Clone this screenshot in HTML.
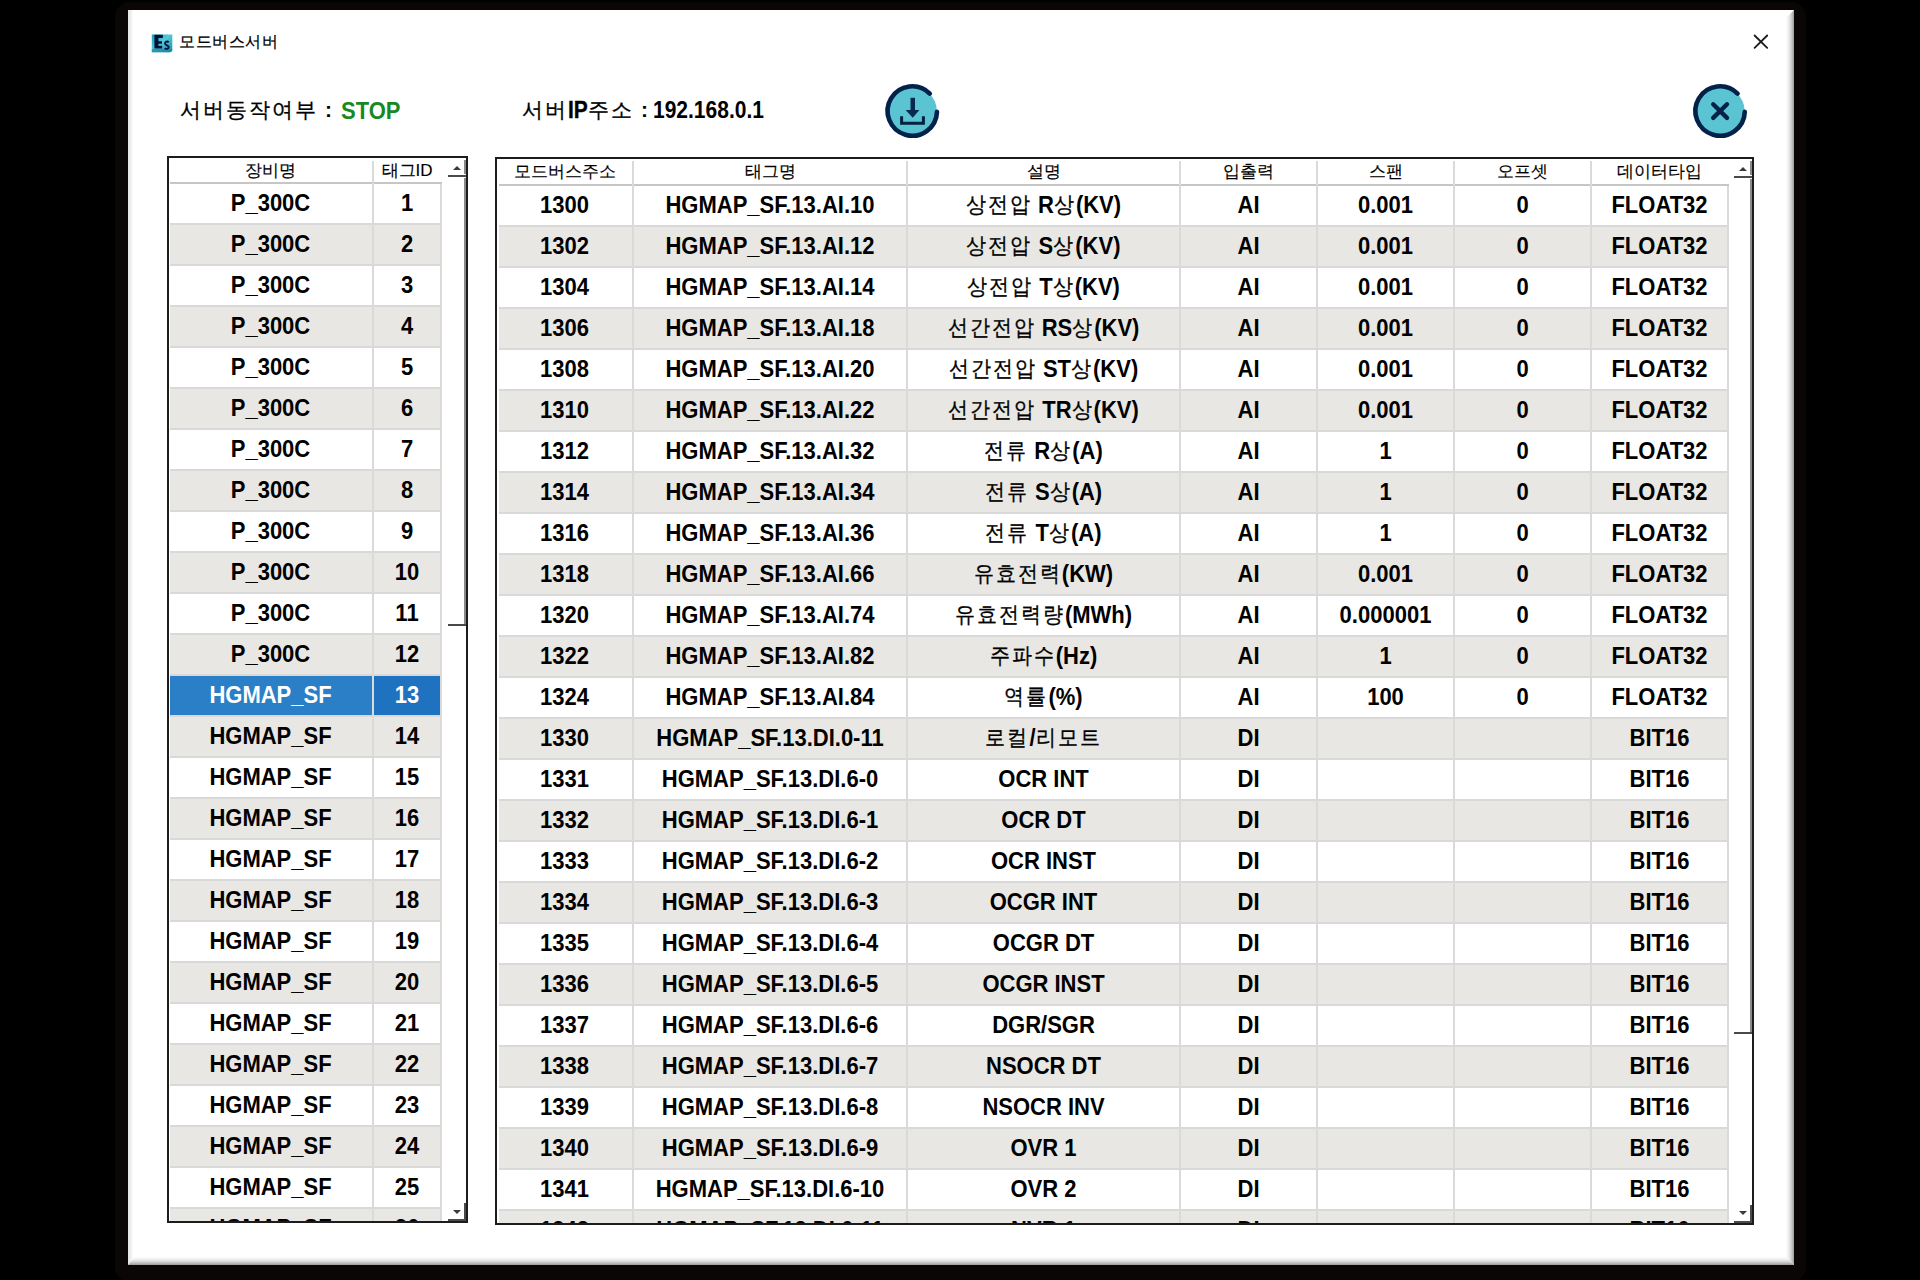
<!DOCTYPE html>
<html><head><meta charset="utf-8"><style>
html,body{margin:0;padding:0}
body{width:1920px;height:1280px;background:#000;position:relative;overflow:hidden;font-family:"Liberation Sans",sans-serif;color:#000}
.fr{position:absolute;left:115px;top:2px;width:1691px;height:1280px;background:#0a0605;border-radius:15px}
.win{position:absolute;left:128px;top:10px;width:1666px;height:1255px;background:#fff;overflow:hidden}
.bl{position:absolute;left:0;top:0;width:5px;height:100%;background:linear-gradient(90deg,#e6e6e6,#ececec 50%,#fff)}
.br{position:absolute;right:0;top:0;width:8px;height:100%;background:linear-gradient(90deg,#fff,#e4e4e4 45%,#c4c4c4 72%,#9c9c9c);clip-path:polygon(0 8px,100% 0,100% 100%,0 calc(100% - 8px))}
.bb{position:absolute;left:0;bottom:0;width:100%;height:8px;background:linear-gradient(180deg,#fff,#e4e4e4 45%,#c4c4c4 72%,#9a9a9a);clip-path:polygon(7px 0,calc(100% - 8px) 0,100% 100%,0 100%)}
.ab{position:absolute;white-space:nowrap}
.tb{position:absolute;box-sizing:border-box;border:2px solid #1c1c1c;background:#fff}
.in{position:absolute;left:0;top:0;overflow:hidden}
.in>div{position:absolute}
.hc{text-align:center;font-size:17px;line-height:20px;height:20px;letter-spacing:0px;-webkit-text-stroke:0.15px #000}
.sy{display:inline-block;transform:scaleY(1.12)}
.hl{height:2px;background:#c6c6c6}
.rl{height:2px;background:#d9d9d9}
.vl{width:2px;background:#dadada}
.r{height:39px;background:#fff}
.r.a{background:#e8e7e3}
.r.s{background:linear-gradient(90deg,#2a7fc7 0,#2a7fc7 202px,#1f72bf 202px);color:#fff}
.c{position:absolute;top:-1px;height:39px;line-height:39px;text-align:center;font-weight:bold;font-size:22px;white-space:nowrap;transform:scaleY(1.1)}
.c i{font-style:normal;font-weight:normal;letter-spacing:2px;font-size:20px;-webkit-text-stroke:0.3px #000;position:relative;top:-1px}
.s .c i{-webkit-text-stroke-color:#fff}
.tri{width:0;height:0;border-left:4px solid transparent;border-right:4px solid transparent}
.tri.up{border-bottom:4px solid #3a3a3a}
.tri.dn{border-top:4px solid #3a3a3a}
.dk{background:#4a4a4a}
.gr{background:#8a8a8a}
</style></head><body>
<div class="fr"></div>
<div class="win"><div class="bl"></div><div class="br"></div><div class="bb"></div></div>
<svg class="ab" style="left:151px;top:34px" width="22" height="19" viewBox="0 0 22 19">
<defs><linearGradient id="ig" x1="0" y1="0" x2="1" y2="1"><stop offset="0" stop-color="#12a0b4"/><stop offset="0.45" stop-color="#55c8d6"/><stop offset="1" stop-color="#1592a8"/></linearGradient></defs>
<path d="M0.8 0.6 H21.3 V15.5 Q21.3 18.3 18.5 18.3 H0.8 Z" fill="url(#ig)"/>
<path d="M0.8 15 H21.3 V15.5 Q21.3 18.3 18.5 18.3 H0.8 Z" fill="#168aa2" opacity="0.7"/>
<path d="M3.4 0.8 H11.8 V4.1 H7.4 V7.3 H11 V9.8 H7.4 V11.8 H11.2 V14.6 H3.4 Z" fill="#06103a"/>
<path d="M17.6 8.3 C16.6 7 14 7.3 14 9.4 C14 11.6 17.8 11 17.8 13 C17.8 15.2 14.8 15.3 13.7 14.2" fill="none" stroke="#06103a" stroke-width="1.9"/>
</svg>
<div class="ab" style="left:179px;top:32px;font-size:16px;letter-spacing:0.6px;-webkit-text-stroke:0.25px #000">모드버스서버</div>
<svg class="ab" style="left:1750px;top:31px" width="22" height="22" viewBox="0 0 22 22"><path d="M4.6 4.5L17.2 16.8M17.2 4.5L4.6 16.8" stroke="#1a1a1a" stroke-width="1.8" stroke-linecap="round"/></svg>
<div class="ab" style="left:180px;top:96px;font-size:21px;letter-spacing:2px;-webkit-text-stroke:0.3px #000">서버동작여부</div>
<div class="ab" style="left:325px;top:98px;font-size:21px;font-weight:bold">:</div>
<div class="ab" style="left:341px;top:98px;font-size:22px;font-weight:bold;color:#168a22"><span class="sy">STOP</span></div>
<div class="ab" style="left:522px;top:96px;font-size:21px;letter-spacing:2px;-webkit-text-stroke:0.3px #000">서버<b style="font-family:'Liberation Sans';letter-spacing:0;font-size:21px" class="sy">IP</b>주소</div>
<div class="ab" style="left:641px;top:98px;font-size:21px;font-weight:bold">:</div>
<div class="ab" style="left:653px;top:98px;font-size:21px;font-weight:bold"><span class="sy">192.168.0.1</span></div>
<svg class="ab" style="left:882px;top:81px" width="62" height="60" viewBox="0 0 62 60">
<circle cx="30.3" cy="30" r="24.5" fill="#5bc4d3"/>
<path d="M47.77 12.53 A24.7 24.7 0 1 0 54.98 30.86" fill="none" stroke="#03224a" stroke-width="4.6" stroke-linecap="round"/>
<rect x="28.5" y="16.8" width="4.5" height="13" fill="#05294f"/>
<path d="M23.6 29 L37.4 29 L30.75 36.8 Z" fill="#05294f"/>
<path d="M19.6 35.3 V42.2 H41.4 V35.3" fill="none" stroke="#04203f" stroke-width="3"/>
</svg>
<svg class="ab" style="left:1690px;top:81px" width="62" height="60" viewBox="0 0 62 60">
<circle cx="30.1" cy="30" r="24.5" fill="#5bc4d3"/>
<path d="M47.57 12.53 A24.7 24.7 0 1 0 54.78 30.86" fill="none" stroke="#03224a" stroke-width="4.6" stroke-linecap="round"/>
<path d="M23.2 23.3 L37 36.9 M37 23.3 L23.2 36.9" stroke="#04234a" stroke-width="4.4" stroke-linecap="round"/>
</svg>
<div class="tb" style="left:167px;top:156px;width:301px;height:1067px">
<div class="in" style="width:297px;height:1063px">
<div class="hc" style="left:0px;width:203px;top:3px">장비명</div>
<div class="hc" style="left:205px;width:66px;top:3px">태그ID</div>
<div class="hl" style="left:1px;width:272px;top:24px"></div>
<div class="r" style="left:1px;width:270px;top:26px">
<div class="c" style="left:-1px;width:203px">P_300C</div>
<div class="c" style="left:204px;width:66px">1</div>
</div>
<div class="rl" style="left:1px;width:272px;top:65px"></div>
<div class="r a" style="left:1px;width:270px;top:67px">
<div class="c" style="left:-1px;width:203px">P_300C</div>
<div class="c" style="left:204px;width:66px">2</div>
</div>
<div class="rl" style="left:1px;width:272px;top:106px"></div>
<div class="r" style="left:1px;width:270px;top:108px">
<div class="c" style="left:-1px;width:203px">P_300C</div>
<div class="c" style="left:204px;width:66px">3</div>
</div>
<div class="rl" style="left:1px;width:272px;top:147px"></div>
<div class="r a" style="left:1px;width:270px;top:149px">
<div class="c" style="left:-1px;width:203px">P_300C</div>
<div class="c" style="left:204px;width:66px">4</div>
</div>
<div class="rl" style="left:1px;width:272px;top:188px"></div>
<div class="r" style="left:1px;width:270px;top:190px">
<div class="c" style="left:-1px;width:203px">P_300C</div>
<div class="c" style="left:204px;width:66px">5</div>
</div>
<div class="rl" style="left:1px;width:272px;top:229px"></div>
<div class="r a" style="left:1px;width:270px;top:231px">
<div class="c" style="left:-1px;width:203px">P_300C</div>
<div class="c" style="left:204px;width:66px">6</div>
</div>
<div class="rl" style="left:1px;width:272px;top:270px"></div>
<div class="r" style="left:1px;width:270px;top:272px">
<div class="c" style="left:-1px;width:203px">P_300C</div>
<div class="c" style="left:204px;width:66px">7</div>
</div>
<div class="rl" style="left:1px;width:272px;top:311px"></div>
<div class="r a" style="left:1px;width:270px;top:313px">
<div class="c" style="left:-1px;width:203px">P_300C</div>
<div class="c" style="left:204px;width:66px">8</div>
</div>
<div class="rl" style="left:1px;width:272px;top:352px"></div>
<div class="r" style="left:1px;width:270px;top:354px">
<div class="c" style="left:-1px;width:203px">P_300C</div>
<div class="c" style="left:204px;width:66px">9</div>
</div>
<div class="rl" style="left:1px;width:272px;top:393px"></div>
<div class="r a" style="left:1px;width:270px;top:395px">
<div class="c" style="left:-1px;width:203px">P_300C</div>
<div class="c" style="left:204px;width:66px">10</div>
</div>
<div class="rl" style="left:1px;width:272px;top:434px"></div>
<div class="r" style="left:1px;width:270px;top:436px">
<div class="c" style="left:-1px;width:203px">P_300C</div>
<div class="c" style="left:204px;width:66px">11</div>
</div>
<div class="rl" style="left:1px;width:272px;top:475px"></div>
<div class="r a" style="left:1px;width:270px;top:477px">
<div class="c" style="left:-1px;width:203px">P_300C</div>
<div class="c" style="left:204px;width:66px">12</div>
</div>
<div class="rl" style="left:1px;width:272px;top:516px"></div>
<div class="r s" style="left:1px;width:270px;top:518px">
<div class="c" style="left:-1px;width:203px">HGMAP_SF</div>
<div class="c" style="left:204px;width:66px">13</div>
</div>
<div class="rl" style="left:1px;width:272px;top:557px"></div>
<div class="r a" style="left:1px;width:270px;top:559px">
<div class="c" style="left:-1px;width:203px">HGMAP_SF</div>
<div class="c" style="left:204px;width:66px">14</div>
</div>
<div class="rl" style="left:1px;width:272px;top:598px"></div>
<div class="r" style="left:1px;width:270px;top:600px">
<div class="c" style="left:-1px;width:203px">HGMAP_SF</div>
<div class="c" style="left:204px;width:66px">15</div>
</div>
<div class="rl" style="left:1px;width:272px;top:639px"></div>
<div class="r a" style="left:1px;width:270px;top:641px">
<div class="c" style="left:-1px;width:203px">HGMAP_SF</div>
<div class="c" style="left:204px;width:66px">16</div>
</div>
<div class="rl" style="left:1px;width:272px;top:680px"></div>
<div class="r" style="left:1px;width:270px;top:682px">
<div class="c" style="left:-1px;width:203px">HGMAP_SF</div>
<div class="c" style="left:204px;width:66px">17</div>
</div>
<div class="rl" style="left:1px;width:272px;top:721px"></div>
<div class="r a" style="left:1px;width:270px;top:723px">
<div class="c" style="left:-1px;width:203px">HGMAP_SF</div>
<div class="c" style="left:204px;width:66px">18</div>
</div>
<div class="rl" style="left:1px;width:272px;top:762px"></div>
<div class="r" style="left:1px;width:270px;top:764px">
<div class="c" style="left:-1px;width:203px">HGMAP_SF</div>
<div class="c" style="left:204px;width:66px">19</div>
</div>
<div class="rl" style="left:1px;width:272px;top:803px"></div>
<div class="r a" style="left:1px;width:270px;top:805px">
<div class="c" style="left:-1px;width:203px">HGMAP_SF</div>
<div class="c" style="left:204px;width:66px">20</div>
</div>
<div class="rl" style="left:1px;width:272px;top:844px"></div>
<div class="r" style="left:1px;width:270px;top:846px">
<div class="c" style="left:-1px;width:203px">HGMAP_SF</div>
<div class="c" style="left:204px;width:66px">21</div>
</div>
<div class="rl" style="left:1px;width:272px;top:885px"></div>
<div class="r a" style="left:1px;width:270px;top:887px">
<div class="c" style="left:-1px;width:203px">HGMAP_SF</div>
<div class="c" style="left:204px;width:66px">22</div>
</div>
<div class="rl" style="left:1px;width:272px;top:926px"></div>
<div class="r" style="left:1px;width:270px;top:928px">
<div class="c" style="left:-1px;width:203px">HGMAP_SF</div>
<div class="c" style="left:204px;width:66px">23</div>
</div>
<div class="rl" style="left:1px;width:272px;top:967px"></div>
<div class="r a" style="left:1px;width:270px;top:969px">
<div class="c" style="left:-1px;width:203px">HGMAP_SF</div>
<div class="c" style="left:204px;width:66px">24</div>
</div>
<div class="rl" style="left:1px;width:272px;top:1008px"></div>
<div class="r" style="left:1px;width:270px;top:1010px">
<div class="c" style="left:-1px;width:203px">HGMAP_SF</div>
<div class="c" style="left:204px;width:66px">25</div>
</div>
<div class="rl" style="left:1px;width:272px;top:1049px"></div>
<div class="r a" style="left:1px;width:270px;top:1051px">
<div class="c" style="left:-1px;width:203px">HGMAP_SF</div>
<div class="c" style="left:204px;width:66px">26</div>
</div>
<div class="rl" style="left:1px;width:272px;top:1090px"></div>
<div class="vl" style="left:203px;top:3px;height:1060px"></div>
<div class="vl" style="left:271px;top:26px;height:1037px"></div>
<div class="tri up" style="left:284px;top:8px"></div>
<div class="tri dn" style="left:284px;top:1052px"></div>
<div class="dk" style="left:279px;top:17px;width:18px;height:2px"></div>
<div class="gr" style="left:295px;top:2px;width:2px;height:14px"></div>
<div class="gr" style="left:295px;top:20px;width:2px;height:446px"></div>
<div class="dk" style="left:279px;top:466px;width:18px;height:2px"></div>
<div class="dk" style="left:295px;top:1045px;width:2px;height:18px"></div>
<div class="dk" style="left:279px;top:1061px;width:18px;height:2px"></div>
</div></div>
<div class="tb" style="left:495px;top:157px;width:1259px;height:1068px">
<div class="in" style="width:1255px;height:1064px">
<div class="hc" style="left:0px;width:135px;top:3px">모드버스주소</div>
<div class="hc" style="left:137px;width:272px;top:3px">태그명</div>
<div class="hc" style="left:411px;width:271px;top:3px">설명</div>
<div class="hc" style="left:684px;width:135px;top:3px">입출력</div>
<div class="hc" style="left:821px;width:135px;top:3px">스팬</div>
<div class="hc" style="left:958px;width:135px;top:3px">오프셋</div>
<div class="hc" style="left:1095px;width:135px;top:3px">데이터타입</div>
<div class="hl" style="left:2px;width:1230px;top:25px"></div>
<div class="r" style="left:2px;width:1228px;top:27px">
<div class="c" style="left:-2px;width:135px">1300</div>
<div class="c" style="left:135px;width:272px">HGMAP_SF.13.AI.10</div>
<div class="c" style="left:409px;width:271px"><i>상전압</i> R<i>상</i>(KV)</div>
<div class="c" style="left:682px;width:135px">AI</div>
<div class="c" style="left:819px;width:135px">0.001</div>
<div class="c" style="left:956px;width:135px">0</div>
<div class="c" style="left:1093px;width:135px">FLOAT32</div>
</div>
<div class="rl" style="left:2px;width:1230px;top:66px"></div>
<div class="r a" style="left:2px;width:1228px;top:68px">
<div class="c" style="left:-2px;width:135px">1302</div>
<div class="c" style="left:135px;width:272px">HGMAP_SF.13.AI.12</div>
<div class="c" style="left:409px;width:271px"><i>상전압</i> S<i>상</i>(KV)</div>
<div class="c" style="left:682px;width:135px">AI</div>
<div class="c" style="left:819px;width:135px">0.001</div>
<div class="c" style="left:956px;width:135px">0</div>
<div class="c" style="left:1093px;width:135px">FLOAT32</div>
</div>
<div class="rl" style="left:2px;width:1230px;top:107px"></div>
<div class="r" style="left:2px;width:1228px;top:109px">
<div class="c" style="left:-2px;width:135px">1304</div>
<div class="c" style="left:135px;width:272px">HGMAP_SF.13.AI.14</div>
<div class="c" style="left:409px;width:271px"><i>상전압</i> T<i>상</i>(KV)</div>
<div class="c" style="left:682px;width:135px">AI</div>
<div class="c" style="left:819px;width:135px">0.001</div>
<div class="c" style="left:956px;width:135px">0</div>
<div class="c" style="left:1093px;width:135px">FLOAT32</div>
</div>
<div class="rl" style="left:2px;width:1230px;top:148px"></div>
<div class="r a" style="left:2px;width:1228px;top:150px">
<div class="c" style="left:-2px;width:135px">1306</div>
<div class="c" style="left:135px;width:272px">HGMAP_SF.13.AI.18</div>
<div class="c" style="left:409px;width:271px"><i>선간전압</i> RS<i>상</i>(KV)</div>
<div class="c" style="left:682px;width:135px">AI</div>
<div class="c" style="left:819px;width:135px">0.001</div>
<div class="c" style="left:956px;width:135px">0</div>
<div class="c" style="left:1093px;width:135px">FLOAT32</div>
</div>
<div class="rl" style="left:2px;width:1230px;top:189px"></div>
<div class="r" style="left:2px;width:1228px;top:191px">
<div class="c" style="left:-2px;width:135px">1308</div>
<div class="c" style="left:135px;width:272px">HGMAP_SF.13.AI.20</div>
<div class="c" style="left:409px;width:271px"><i>선간전압</i> ST<i>상</i>(KV)</div>
<div class="c" style="left:682px;width:135px">AI</div>
<div class="c" style="left:819px;width:135px">0.001</div>
<div class="c" style="left:956px;width:135px">0</div>
<div class="c" style="left:1093px;width:135px">FLOAT32</div>
</div>
<div class="rl" style="left:2px;width:1230px;top:230px"></div>
<div class="r a" style="left:2px;width:1228px;top:232px">
<div class="c" style="left:-2px;width:135px">1310</div>
<div class="c" style="left:135px;width:272px">HGMAP_SF.13.AI.22</div>
<div class="c" style="left:409px;width:271px"><i>선간전압</i> TR<i>상</i>(KV)</div>
<div class="c" style="left:682px;width:135px">AI</div>
<div class="c" style="left:819px;width:135px">0.001</div>
<div class="c" style="left:956px;width:135px">0</div>
<div class="c" style="left:1093px;width:135px">FLOAT32</div>
</div>
<div class="rl" style="left:2px;width:1230px;top:271px"></div>
<div class="r" style="left:2px;width:1228px;top:273px">
<div class="c" style="left:-2px;width:135px">1312</div>
<div class="c" style="left:135px;width:272px">HGMAP_SF.13.AI.32</div>
<div class="c" style="left:409px;width:271px"><i>전류</i> R<i>상</i>(A)</div>
<div class="c" style="left:682px;width:135px">AI</div>
<div class="c" style="left:819px;width:135px">1</div>
<div class="c" style="left:956px;width:135px">0</div>
<div class="c" style="left:1093px;width:135px">FLOAT32</div>
</div>
<div class="rl" style="left:2px;width:1230px;top:312px"></div>
<div class="r a" style="left:2px;width:1228px;top:314px">
<div class="c" style="left:-2px;width:135px">1314</div>
<div class="c" style="left:135px;width:272px">HGMAP_SF.13.AI.34</div>
<div class="c" style="left:409px;width:271px"><i>전류</i> S<i>상</i>(A)</div>
<div class="c" style="left:682px;width:135px">AI</div>
<div class="c" style="left:819px;width:135px">1</div>
<div class="c" style="left:956px;width:135px">0</div>
<div class="c" style="left:1093px;width:135px">FLOAT32</div>
</div>
<div class="rl" style="left:2px;width:1230px;top:353px"></div>
<div class="r" style="left:2px;width:1228px;top:355px">
<div class="c" style="left:-2px;width:135px">1316</div>
<div class="c" style="left:135px;width:272px">HGMAP_SF.13.AI.36</div>
<div class="c" style="left:409px;width:271px"><i>전류</i> T<i>상</i>(A)</div>
<div class="c" style="left:682px;width:135px">AI</div>
<div class="c" style="left:819px;width:135px">1</div>
<div class="c" style="left:956px;width:135px">0</div>
<div class="c" style="left:1093px;width:135px">FLOAT32</div>
</div>
<div class="rl" style="left:2px;width:1230px;top:394px"></div>
<div class="r a" style="left:2px;width:1228px;top:396px">
<div class="c" style="left:-2px;width:135px">1318</div>
<div class="c" style="left:135px;width:272px">HGMAP_SF.13.AI.66</div>
<div class="c" style="left:409px;width:271px"><i>유효전력</i>(KW)</div>
<div class="c" style="left:682px;width:135px">AI</div>
<div class="c" style="left:819px;width:135px">0.001</div>
<div class="c" style="left:956px;width:135px">0</div>
<div class="c" style="left:1093px;width:135px">FLOAT32</div>
</div>
<div class="rl" style="left:2px;width:1230px;top:435px"></div>
<div class="r" style="left:2px;width:1228px;top:437px">
<div class="c" style="left:-2px;width:135px">1320</div>
<div class="c" style="left:135px;width:272px">HGMAP_SF.13.AI.74</div>
<div class="c" style="left:409px;width:271px"><i>유효전력량</i>(MWh)</div>
<div class="c" style="left:682px;width:135px">AI</div>
<div class="c" style="left:819px;width:135px">0.000001</div>
<div class="c" style="left:956px;width:135px">0</div>
<div class="c" style="left:1093px;width:135px">FLOAT32</div>
</div>
<div class="rl" style="left:2px;width:1230px;top:476px"></div>
<div class="r a" style="left:2px;width:1228px;top:478px">
<div class="c" style="left:-2px;width:135px">1322</div>
<div class="c" style="left:135px;width:272px">HGMAP_SF.13.AI.82</div>
<div class="c" style="left:409px;width:271px"><i>주파수</i>(Hz)</div>
<div class="c" style="left:682px;width:135px">AI</div>
<div class="c" style="left:819px;width:135px">1</div>
<div class="c" style="left:956px;width:135px">0</div>
<div class="c" style="left:1093px;width:135px">FLOAT32</div>
</div>
<div class="rl" style="left:2px;width:1230px;top:517px"></div>
<div class="r" style="left:2px;width:1228px;top:519px">
<div class="c" style="left:-2px;width:135px">1324</div>
<div class="c" style="left:135px;width:272px">HGMAP_SF.13.AI.84</div>
<div class="c" style="left:409px;width:271px"><i>역률</i>(%)</div>
<div class="c" style="left:682px;width:135px">AI</div>
<div class="c" style="left:819px;width:135px">100</div>
<div class="c" style="left:956px;width:135px">0</div>
<div class="c" style="left:1093px;width:135px">FLOAT32</div>
</div>
<div class="rl" style="left:2px;width:1230px;top:558px"></div>
<div class="r a" style="left:2px;width:1228px;top:560px">
<div class="c" style="left:-2px;width:135px">1330</div>
<div class="c" style="left:135px;width:272px">HGMAP_SF.13.DI.0-11</div>
<div class="c" style="left:409px;width:271px"><i>로컬</i>/<i>리모트</i></div>
<div class="c" style="left:682px;width:135px">DI</div>
<div class="c" style="left:1093px;width:135px">BIT16</div>
</div>
<div class="rl" style="left:2px;width:1230px;top:599px"></div>
<div class="r" style="left:2px;width:1228px;top:601px">
<div class="c" style="left:-2px;width:135px">1331</div>
<div class="c" style="left:135px;width:272px">HGMAP_SF.13.DI.6-0</div>
<div class="c" style="left:409px;width:271px">OCR INT</div>
<div class="c" style="left:682px;width:135px">DI</div>
<div class="c" style="left:1093px;width:135px">BIT16</div>
</div>
<div class="rl" style="left:2px;width:1230px;top:640px"></div>
<div class="r a" style="left:2px;width:1228px;top:642px">
<div class="c" style="left:-2px;width:135px">1332</div>
<div class="c" style="left:135px;width:272px">HGMAP_SF.13.DI.6-1</div>
<div class="c" style="left:409px;width:271px">OCR DT</div>
<div class="c" style="left:682px;width:135px">DI</div>
<div class="c" style="left:1093px;width:135px">BIT16</div>
</div>
<div class="rl" style="left:2px;width:1230px;top:681px"></div>
<div class="r" style="left:2px;width:1228px;top:683px">
<div class="c" style="left:-2px;width:135px">1333</div>
<div class="c" style="left:135px;width:272px">HGMAP_SF.13.DI.6-2</div>
<div class="c" style="left:409px;width:271px">OCR INST</div>
<div class="c" style="left:682px;width:135px">DI</div>
<div class="c" style="left:1093px;width:135px">BIT16</div>
</div>
<div class="rl" style="left:2px;width:1230px;top:722px"></div>
<div class="r a" style="left:2px;width:1228px;top:724px">
<div class="c" style="left:-2px;width:135px">1334</div>
<div class="c" style="left:135px;width:272px">HGMAP_SF.13.DI.6-3</div>
<div class="c" style="left:409px;width:271px">OCGR INT</div>
<div class="c" style="left:682px;width:135px">DI</div>
<div class="c" style="left:1093px;width:135px">BIT16</div>
</div>
<div class="rl" style="left:2px;width:1230px;top:763px"></div>
<div class="r" style="left:2px;width:1228px;top:765px">
<div class="c" style="left:-2px;width:135px">1335</div>
<div class="c" style="left:135px;width:272px">HGMAP_SF.13.DI.6-4</div>
<div class="c" style="left:409px;width:271px">OCGR DT</div>
<div class="c" style="left:682px;width:135px">DI</div>
<div class="c" style="left:1093px;width:135px">BIT16</div>
</div>
<div class="rl" style="left:2px;width:1230px;top:804px"></div>
<div class="r a" style="left:2px;width:1228px;top:806px">
<div class="c" style="left:-2px;width:135px">1336</div>
<div class="c" style="left:135px;width:272px">HGMAP_SF.13.DI.6-5</div>
<div class="c" style="left:409px;width:271px">OCGR INST</div>
<div class="c" style="left:682px;width:135px">DI</div>
<div class="c" style="left:1093px;width:135px">BIT16</div>
</div>
<div class="rl" style="left:2px;width:1230px;top:845px"></div>
<div class="r" style="left:2px;width:1228px;top:847px">
<div class="c" style="left:-2px;width:135px">1337</div>
<div class="c" style="left:135px;width:272px">HGMAP_SF.13.DI.6-6</div>
<div class="c" style="left:409px;width:271px">DGR/SGR</div>
<div class="c" style="left:682px;width:135px">DI</div>
<div class="c" style="left:1093px;width:135px">BIT16</div>
</div>
<div class="rl" style="left:2px;width:1230px;top:886px"></div>
<div class="r a" style="left:2px;width:1228px;top:888px">
<div class="c" style="left:-2px;width:135px">1338</div>
<div class="c" style="left:135px;width:272px">HGMAP_SF.13.DI.6-7</div>
<div class="c" style="left:409px;width:271px">NSOCR DT</div>
<div class="c" style="left:682px;width:135px">DI</div>
<div class="c" style="left:1093px;width:135px">BIT16</div>
</div>
<div class="rl" style="left:2px;width:1230px;top:927px"></div>
<div class="r" style="left:2px;width:1228px;top:929px">
<div class="c" style="left:-2px;width:135px">1339</div>
<div class="c" style="left:135px;width:272px">HGMAP_SF.13.DI.6-8</div>
<div class="c" style="left:409px;width:271px">NSOCR INV</div>
<div class="c" style="left:682px;width:135px">DI</div>
<div class="c" style="left:1093px;width:135px">BIT16</div>
</div>
<div class="rl" style="left:2px;width:1230px;top:968px"></div>
<div class="r a" style="left:2px;width:1228px;top:970px">
<div class="c" style="left:-2px;width:135px">1340</div>
<div class="c" style="left:135px;width:272px">HGMAP_SF.13.DI.6-9</div>
<div class="c" style="left:409px;width:271px">OVR 1</div>
<div class="c" style="left:682px;width:135px">DI</div>
<div class="c" style="left:1093px;width:135px">BIT16</div>
</div>
<div class="rl" style="left:2px;width:1230px;top:1009px"></div>
<div class="r" style="left:2px;width:1228px;top:1011px">
<div class="c" style="left:-2px;width:135px">1341</div>
<div class="c" style="left:135px;width:272px">HGMAP_SF.13.DI.6-10</div>
<div class="c" style="left:409px;width:271px">OVR 2</div>
<div class="c" style="left:682px;width:135px">DI</div>
<div class="c" style="left:1093px;width:135px">BIT16</div>
</div>
<div class="rl" style="left:2px;width:1230px;top:1050px"></div>
<div class="r a" style="left:2px;width:1228px;top:1052px">
<div class="c" style="left:-2px;width:135px">1342</div>
<div class="c" style="left:135px;width:272px">HGMAP_SF.13.DI.6-11</div>
<div class="c" style="left:409px;width:271px">NVR 1</div>
<div class="c" style="left:682px;width:135px">DI</div>
<div class="c" style="left:1093px;width:135px">BIT16</div>
</div>
<div class="rl" style="left:2px;width:1230px;top:1091px"></div>
<div class="vl" style="left:135px;top:2px;height:1062px"></div>
<div class="vl" style="left:409px;top:2px;height:1062px"></div>
<div class="vl" style="left:682px;top:2px;height:1062px"></div>
<div class="vl" style="left:819px;top:2px;height:1062px"></div>
<div class="vl" style="left:956px;top:2px;height:1062px"></div>
<div class="vl" style="left:1093px;top:2px;height:1062px"></div>
<div class="vl" style="left:1230px;top:27px;height:1037px"></div>
<div class="tri up" style="left:1242px;top:8px"></div>
<div class="tri dn" style="left:1242px;top:1052px"></div>
<div class="dk" style="left:1237px;top:17px;width:18px;height:2px"></div>
<div class="gr" style="left:1253px;top:2px;width:2px;height:14px"></div>
<div class="gr" style="left:1253px;top:20px;width:2px;height:853px"></div>
<div class="dk" style="left:1237px;top:873px;width:18px;height:2px"></div>
<div class="dk" style="left:1253px;top:1046px;width:2px;height:18px"></div>
<div class="dk" style="left:1237px;top:1062px;width:18px;height:2px"></div>
</div></div>
</body></html>
